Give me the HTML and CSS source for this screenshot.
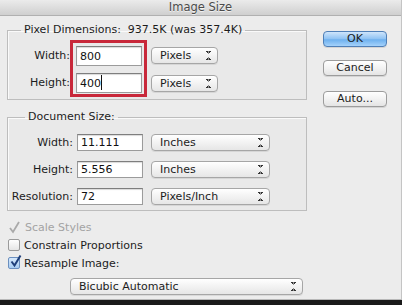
FILE: index.html
```html
<!DOCTYPE html>
<html lang="en">
<head>
    <meta charset="UTF-8">
    <meta name="viewport" content="width=device-width, initial-scale=1.0">
    <title>Image Size</title>
    <link rel="stylesheet" href="styles.css">
</head>
<body>
    <div class="window">
        <div class="titlebar">Image Size</div>

        <div class="content">
            <div class="main">
                <fieldset class="group pixel-group">
                    <legend>Pixel Dimensions:&nbsp; 937.5K (was 357.4K)</legend>
                    <div class="pixel-rows">
                        <div class="labels">
                            <span class="label">Width:</span>
                            <span class="label">Height:</span>
                        </div>
                        <div class="highlight">
                            <div class="field">800</div>
                            <div class="field">400<span class="caret"></span></div>
                        </div>
                        <div class="selects">
                            <div class="select small">Pixels<span class="arrows"></span></div>
                            <div class="select small">Pixels<span class="arrows"></span></div>
                        </div>
                    </div>
                </fieldset>

                <fieldset class="group doc-group">
                    <legend>Document Size:</legend>
                    <div class="row">
                        <span class="label">Width:</span>
                        <div class="field">11.111</div>
                        <div class="select wide">Inches<span class="arrows"></span></div>
                    </div>
                    <div class="row">
                        <span class="label">Height:</span>
                        <div class="field">5.556</div>
                        <div class="select wide">Inches<span class="arrows"></span></div>
                    </div>
                    <div class="row">
                        <span class="label">Resolution:</span>
                        <div class="field">72</div>
                        <div class="select wide">Pixels/Inch<span class="arrows"></span></div>
                    </div>
                </fieldset>

                <div class="options">
                    <div class="check disabled">
                        <svg class="tick-only" width="13" height="13" viewBox="0 0 13 13">
                            <path d="M2 7 L5 11 L11 1" fill="none" stroke="#a9a9a9" stroke-width="1.8"/>
                        </svg>
                        Scale Styles
                    </div>
                    <div class="check">
                        <span class="box"></span>
                        Constrain Proportions
                    </div>
                    <div class="check">
                        <span class="box checked">
                            <svg width="13" height="13" viewBox="0 0 13 13">
                                <path d="M2.5 6.5 L5.5 10.5 L11.5 0.5" fill="none" stroke="#1f3f7a" stroke-width="2"/>
                            </svg>
                        </span>
                        Resample Image:
                    </div>
                    <div class="select method">Bicubic Automatic<span class="arrows"></span></div>
                </div>
            </div>

            <div class="buttons">
                <div class="btn default">OK</div>
                <div class="btn">Cancel</div>
                <div class="btn auto">Auto...</div>
            </div>
        </div>
    </div>
</body>
</html>
```

FILE: styles.css
```css
* {
    margin: 0;
    padding: 0;
    box-sizing: border-box;
}

body {
    width: 402px;
    height: 305px;
    overflow: hidden;
    background: #1a1a1a;
    font-family: "DejaVu Sans", sans-serif;
    font-size: 11px;
    color: #1c1c1c;
}

.window {
    width: 402px;
    height: 300px;
    background: #ececec;
    border-right: 1px solid #c4c4c4;
    border-bottom: 1px solid #b8b8b8;
}

.titlebar {
    height: 16px;
    background: linear-gradient(#ebebeb, #cfcfcf);
    border-bottom: 1px solid #b0b0b0;
    text-align: center;
    font-size: 11.5px;
    line-height: 15px;
    color: #4a4a4a;
    text-shadow: 0 1px 0 rgba(255, 255, 255, 0.7);
}

.content {
    display: flex;
    padding-left: 7px;
}

.main {
    width: 300px;
}

/* group boxes */
.group {
    border: 1px solid #bdbdbd;
    background: #e9e9e9;
    box-shadow: inset 1px 1px 0 #fafafa;
}

.group legend {
    padding: 0 3px;
    line-height: 14px;
}

.pixel-group {
    margin-top: 7px;
    height: 77px;
}

.pixel-group legend {
    margin-left: 13px;
}

.pixel-rows {
    display: flex;
    margin-top: 3px;
}

.labels {
    width: 62px;
    display: flex;
    flex-direction: column;
    align-items: flex-end;
    padding-top: 9px;
    gap: 13px;
}

.highlight {
    display: flex;
    flex-direction: column;
    gap: 7px;
    border: 3px solid #c8283a;
    padding: 3px 2px 0 3px;
    width: 77px;
    height: 57px;
}

.highlight .field {
    height: 20px;
    line-height: 20px;
    width: 66px;
}

.selects {
    display: flex;
    flex-direction: column;
    gap: 11px;
    padding-top: 7px;
    margin-left: 4px;
}

.label {
    line-height: 14px;
}

.field {
    width: 66px;
    height: 17px;
    background: #fff;
    border: 1px solid #9b9b9b;
    border-top-color: #7e7e7e;
    box-shadow: inset 0 1px 1px rgba(0, 0, 0, 0.15);
    padding-left: 3px;
    line-height: 16px;
    color: #111;
}

.caret {
    display: inline-block;
    width: 1px;
    height: 15px;
    background: #111;
    vertical-align: -3px;
}

.select {
    position: relative;
    height: 17px;
    border: 1px solid #a6a6a6;
    border-radius: 4px;
    background: linear-gradient(#ffffff, #f0f0f0 60%, #e6e6e6);
    box-shadow: 0 1px 0 rgba(0, 0, 0, 0.08);
    padding-left: 8px;
    line-height: 15px;
}

.select.small {
    width: 67px;
}

.select.wide {
    width: 119px;
}

.arrows {
    position: absolute;
    right: 6px;
    top: 3px;
    width: 5px;
    height: 9px;
    background:
        linear-gradient(to top right, transparent 50%, #333 50%) 0 0 / 2.5px 3px no-repeat,
        linear-gradient(to top left, transparent 50%, #333 50%) 2.5px 0 / 2.5px 3px no-repeat,
        linear-gradient(to bottom right, transparent 50%, #333 50%) 0 6px / 2.5px 3px no-repeat,
        linear-gradient(to bottom left, transparent 50%, #333 50%) 2.5px 6px / 2.5px 3px no-repeat;
}

.doc-group {
    margin-top: 10px;
    height: 101px;
    padding-top: 10px;
}

.doc-group legend {
    margin-left: 17px;
}

.row {
    display: flex;
    align-items: center;
    height: 17px;
    margin-bottom: 10px;
}

.row .label {
    width: 65px;
    text-align: right;
    margin-right: 4px;
}

.row .select {
    margin-left: 8px;
}

/* checkboxes */
.options {
    padding-top: 7px;
}

.check {
    display: flex;
    align-items: center;
    gap: 4px;
    height: 18px;
    padding-left: 1px;
}

.check.disabled {
    color: #a3a3a3;
}

.box {
    width: 12px;
    height: 12px;
    border: 1px solid #9a9a9a;
    border-radius: 2px;
    background: linear-gradient(#fff, #e6e6e6);
    position: relative;
}

.box svg {
    position: absolute;
    left: 0;
    top: -3px;
}

.box.checked {
    background: linear-gradient(#d6e8fb, #a9cdf2);
    border-color: #6b8fbf;
}

.select.method {
    width: 233px;
    margin-left: 63px;
    margin-top: 6px;
}

/* buttons */
.buttons {
    display: flex;
    flex-direction: column;
    margin-left: 16px;
    padding-top: 15px;
}

.btn {
    width: 64px;
    height: 16px;
    border: 1px solid #9c9c9c;
    border-radius: 4px;
    background: linear-gradient(#ffffff, #f1f1f1 55%, #e4e4e4);
    box-shadow: 0 1px 0 rgba(0, 0, 0, 0.1);
    text-align: center;
    line-height: 14px;
    margin-bottom: 13px;
}

.btn.default {
    background: linear-gradient(#cfe5fb, #8ec2f3 50%, #6eb0ee 55%, #a4d2fb);
    border-color: #4f7fb7;
}

.btn.auto {
    margin-top: 2px;
}
```
